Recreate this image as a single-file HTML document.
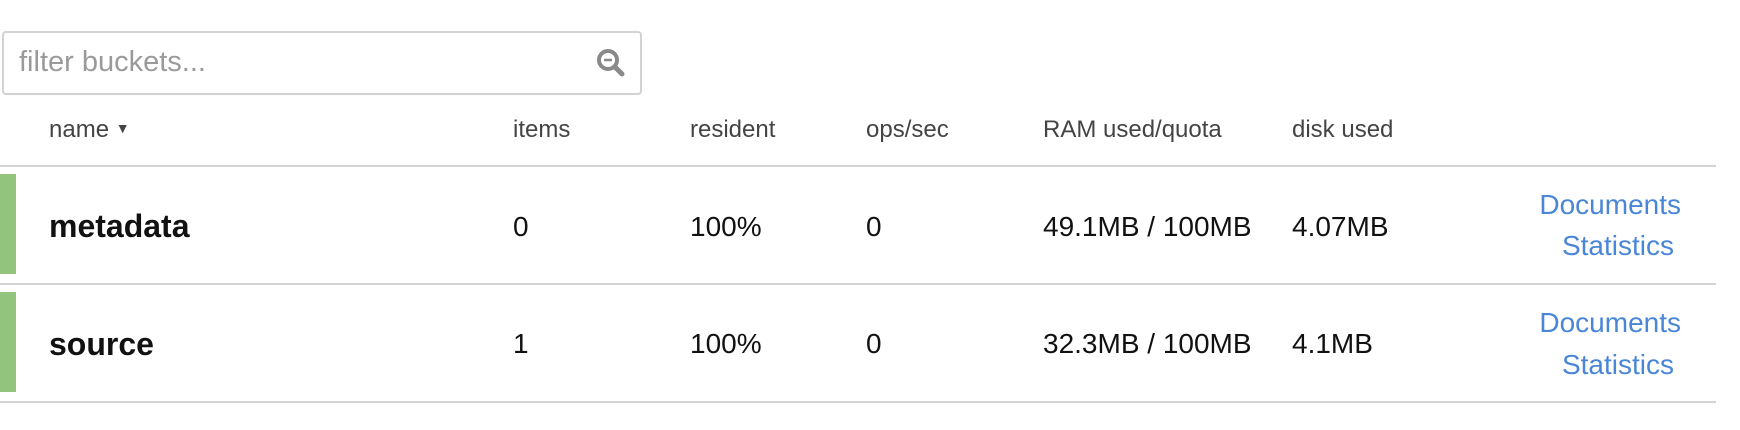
<!DOCTYPE html>
<html><head><meta charset="utf-8"><style>
body{margin:0;width:1740px;height:430px;background:#fff;font-family:"Liberation Sans",sans-serif;position:relative;overflow:hidden}
.a{position:absolute;white-space:nowrap;line-height:1}
.box{position:absolute;left:2px;top:31px;width:636px;height:60px;border:2px solid #d2d2d2;border-radius:4px}
.h{font-size:24px;color:#444;top:118px}
.line{position:absolute;left:0;width:1716px;height:2px;background:#d4d4d4}
.g{position:absolute;left:0;width:16px;background:#93c47d}
.v{font-size:28px;color:#111}
.n{font-size:32px;font-weight:bold;color:#111}
.l{font-size:28px;color:#4a86d8;text-align:right}
</style></head><body>
<div class="box"></div>
<div class="a" style="left:19px;top:48px;font-size:29px;color:#9a9a9a">filter buckets...</div>
<svg style="position:absolute;left:594px;top:46px" width="34" height="34" viewBox="0 0 34 34"><circle cx="14" cy="14" r="9" fill="none" stroke="#8a8a8a" stroke-width="4"/><line x1="10" y1="14" x2="18" y2="14" stroke="#8a8a8a" stroke-width="2.5"/><line x1="21" y1="21" x2="28" y2="28" stroke="#8a8a8a" stroke-width="5" stroke-linecap="round"/></svg>
<div class="a h" style="left:49px">name <span style="font-size:14px;position:relative;top:-4px">&#9660;</span></div>
<div class="a h" style="left:513px">items</div>
<div class="a h" style="left:690px">resident</div>
<div class="a h" style="left:866px">ops/sec</div>
<div class="a h" style="left:1043px">RAM used/quota</div>
<div class="a h" style="left:1292px">disk used</div>
<div class="line" style="top:165px"></div>
<div class="g" style="top:174px;height:100px"></div>
<div class="a n" style="left:49px;top:210px">metadata</div>
<div class="a v" style="left:513px;top:213px">0</div>
<div class="a v" style="left:690px;top:213px">100%</div>
<div class="a v" style="left:866px;top:213px">0</div>
<div class="a v" style="left:1043px;top:213px">49.1MB / 100MB</div>
<div class="a v" style="left:1292px;top:213px">4.07MB</div>
<div class="a l" style="right:59px;top:191px">Documents</div>
<div class="a l" style="right:66px;top:232px">Statistics</div>
<div class="line" style="top:283px"></div>
<div class="g" style="top:292px;height:100px"></div>
<div class="a n" style="left:49px;top:328px">source</div>
<div class="a v" style="left:513px;top:330px">1</div>
<div class="a v" style="left:690px;top:330px">100%</div>
<div class="a v" style="left:866px;top:330px">0</div>
<div class="a v" style="left:1043px;top:330px">32.3MB / 100MB</div>
<div class="a v" style="left:1292px;top:330px">4.1MB</div>
<div class="a l" style="right:59px;top:309px">Documents</div>
<div class="a l" style="right:66px;top:351px">Statistics</div>
<div class="line" style="top:401px"></div>
</body></html>
